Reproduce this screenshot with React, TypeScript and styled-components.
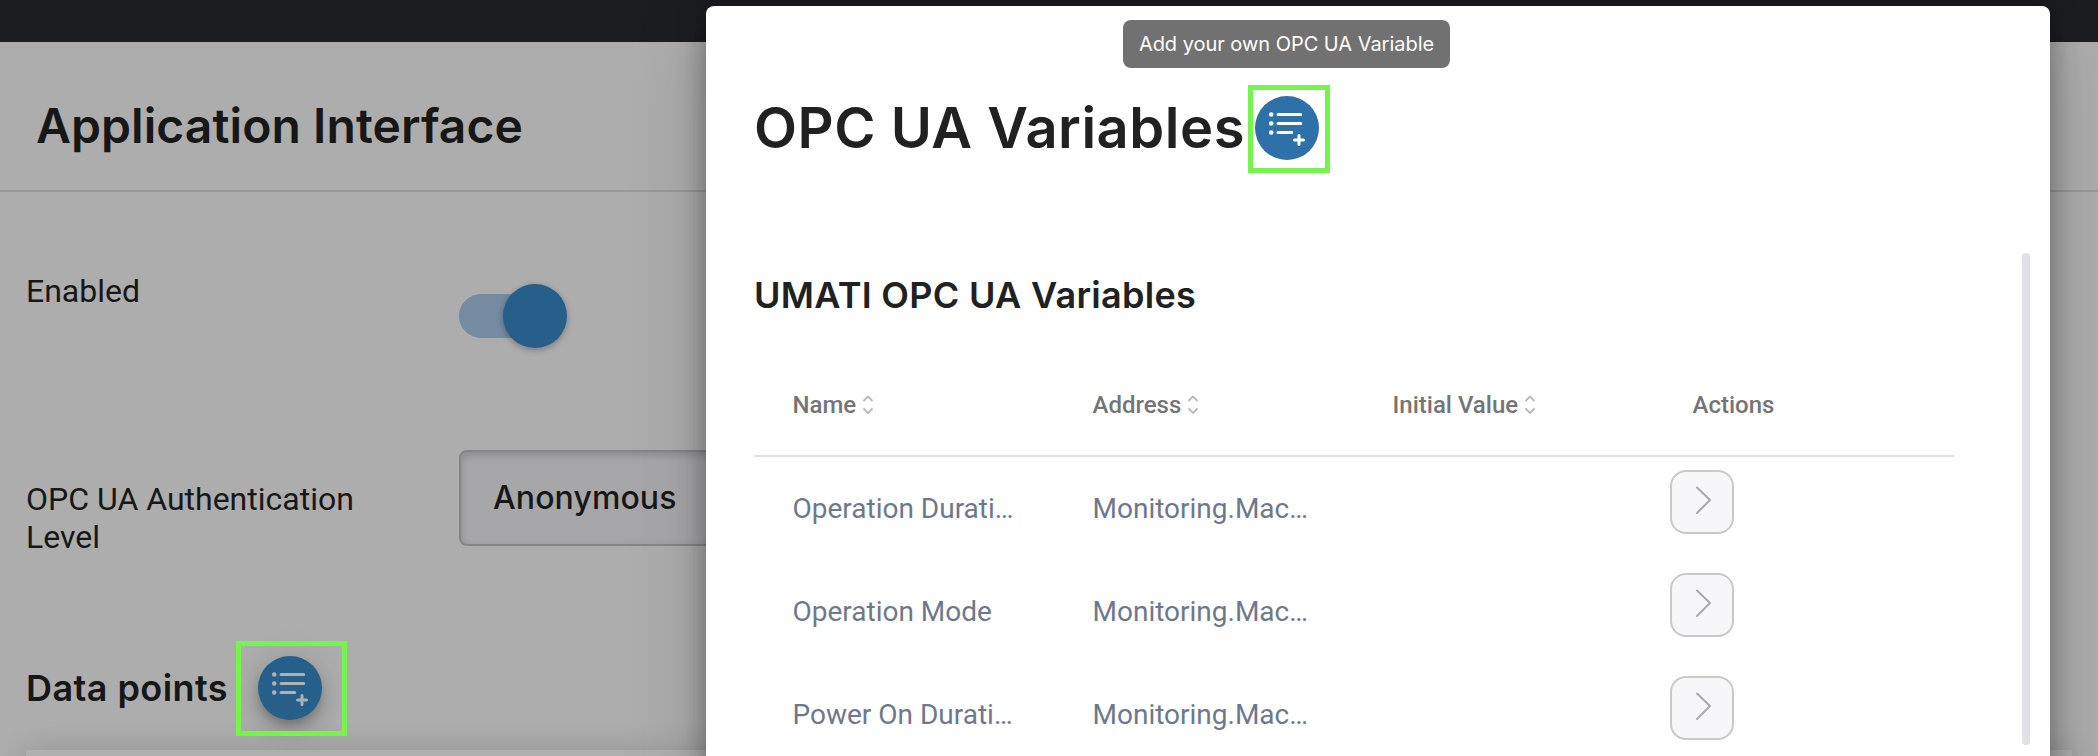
import React from "react";
import styled, { createGlobalStyle } from "styled-components";

const GlobalStyle = createGlobalStyle`
  * { box-sizing: border-box; }
  html, body { margin: 0; padding: 0; overflow: hidden; }
  body { font-family: Roboto, "Liberation Sans", sans-serif; }
  h1, h2, h3, p { margin: 0; }
`;

const inter = `Inter, "Liberation Sans", sans-serif`;

const Screen = styled.div`
  position: relative;
  width: 2098px;
  height: 756px;
  overflow: hidden;
  background: #adadad;
  color: #171717;
`;

const TopBar = styled.div`
  height: 42px;
  background: #1c1d21;
`;

const PageHeader = styled.header`
  height: 150px;
  padding: 54px 36px 0;
  border-bottom: 2px solid #989898;
`;

const PageTitle = styled.h1`
  font: 600 48px/60px ${inter};
  letter-spacing: 0.08px;
`;

const Form = styled.main`
  padding: 80px 26px 0;
`;

const FormRow = styled.div<{ $height: number }>`
  display: grid;
  grid-template-columns: 433px 700px;
  height: ${(p) => p.$height}px;
`;

const Label = styled.p<{ $top?: number }>`
  width: 360px;
  padding-top: ${(p) => p.$top ?? 0}px;
  font-size: 32px;
  line-height: 38px;
`;

const Track = styled.div`
  display: flex;
  align-items: center;
  justify-content: flex-end;
  width: 102px;
  height: 44px;
  margin-top: 22px;
  border-radius: 22px;
  background: #748ba1;
`;

const Thumb = styled.span`
  width: 64px;
  height: 64px;
  margin-right: -6px;
  flex: none;
  border-radius: 50%;
  background: #275f8b;
  box-shadow: 0 2px 6px rgba(0, 0, 0, 0.3);
`;

const Select = styled.div`
  display: flex;
  align-items: center;
  height: 96px;
  padding: 0 32px;
  border: 2px solid #858588;
  border-radius: 8px;
  background: #a7a7a9;
  box-shadow: inset 0 3px 8px rgba(0, 0, 0, 0.18);
  font: 500 32px/40px ${inter};
  letter-spacing: 0.1px;
`;

const SectionHeading = styled.div`
  display: flex;
  align-items: center;
  gap: 31px;
  height: 64px;
`;

const SectionTitle = styled.h2`
  width: 201px;
  white-space: nowrap;
  font: 600 36px/44px ${inter};
  letter-spacing: 0.43px;
`;

const Card = styled.section`
  height: 80px;
  margin: 30px 0 0;
  background: #afafaf;
  box-shadow: 0 0 30px rgba(0, 0, 0, 0.15);
`;

const RoundButton = styled.button<{ $dimmed?: boolean }>`
  position: relative;
  flex: none;
  width: 64px;
  height: 64px;
  padding: 0;
  border: 0;
  border-radius: 50%;
  color: ${(p) => (p.$dimmed ? "#b0b0b0" : "#ffffff")};
  background: ${(p) => (p.$dimmed ? "#275f8b" : "#2d71a8")};
  box-shadow: ${(p) =>
    p.$dimmed
      ? "0 6px 10px -2px rgba(0,0,0,.2), 0 12px 20px rgba(0,0,0,.14), 0 2px 36px rgba(0,0,0,.12)"
      : "none"};
  svg { display: block; }
`;

const Highlight = styled.span<{ $inset: string }>`
  position: absolute;
  inset: ${(p) => p.$inset};
  border: 5px solid #73f54b;
`;

const Dialog = styled.div`
  position: absolute;
  left: 706px;
  top: 6px;
  width: 1344px;
  height: 800px;
  padding: 0 48px;
  border-radius: 8px;
  background: #fff;
  color: #212121;
  box-shadow: 0 22px 30px -14px rgba(0, 0, 0, 0.2),
    0 28px 76px 6px rgba(0, 0, 0, 0.14), 0 0 30px rgba(0, 0, 0, 0.3);
`;

const DialogHeader = styled.div`
  display: flex;
  align-items: center;
  height: 247px;
  padding-bottom: 3px;
`;

const DialogTitle = styled.h2`
  width: 501px;
  white-space: nowrap;
  font: 600 56px/68px ${inter};
  letter-spacing: 0.54px;
`;

const Tooltip = styled.div`
  position: absolute;
  left: 417px;
  top: 14px;
  display: flex;
  align-items: center;
  justify-content: center;
  width: 327px;
  height: 48px;
  border-radius: 8px;
  background: #717171;
  color: #fff;
  white-space: nowrap;
  font: 400 20px/24px ${inter};
  letter-spacing: -0.03px;
`;

const ScrollArea = styled.div`
  display: flex;
  justify-content: space-between;
  margin-right: -28px;
`;

const ScrollThumb = styled.span`
  width: 8px;
  height: 492px;
  border-radius: 4px;
  background: #e0e1e6;
`;

const TableTitle = styled.h3`
  height: 102px;
  padding-top: 20px;
  white-space: nowrap;
  font: 600 36px/44px ${inter};
  letter-spacing: 0.3px;
`;

const TableRow = styled.div`
  display: grid;
  grid-template-columns: repeat(4, 300px);
  align-items: start;
  width: 1200px;
  height: 103px;
  color: #6f788b;
`;

const TableHead = styled(TableRow)`
  height: 102px;
  align-items: center;
  border-bottom: 2px solid #e0e0e0;
  color: #757575;
`;

const HeadCell = styled.div`
  display: flex;
  align-items: center;
  gap: 6px;
  padding-left: 38.5px;
  font-weight: 500;
  font-size: 24px;
  line-height: 28px;
`;

const Cell = styled.div`
  padding: 34px 38px 0 38.5px;
  white-space: nowrap;
  font-size: 28px;
  line-height: 36px;
`;

const RowButton = styled.button`
  width: 64px;
  height: 64px;
  margin: 13px 0 0 16px;
  padding: 0;
  border: 2px solid #c9c9ca;
  border-radius: 16px;
  background: #f7f7fa;
  svg { display: block; }
`;

const ListAddIcon = () => (
  <svg width="64" height="64" viewBox="0 0 64 64" fill="none" stroke="currentColor" strokeWidth="3" strokeLinecap="round">
    <g fill="currentColor" stroke="none">
      <circle cx="16.2" cy="18.5" r="2.3" />
      <circle cx="16.2" cy="27.5" r="2.3" />
      <circle cx="16.2" cy="36.5" r="2.3" />
    </g>
    <path d="M23 18.5H45.7M23 27.5H45.7M23 36.5H36.8M39.5 44H48.5M44 39.5V48.5" />
  </svg>
);

const SortIcon = () => (
  <svg width="12" height="20" viewBox="0 0 12 20" fill="none" stroke="#b9b9b9" strokeWidth="1.8">
    <path d="M1.5 6L6 1.5L10.5 6M1.5 13.5L6 18L10.5 13.5" />
  </svg>
);

const ChevronIcon = () => (
  <svg width="60" height="60" viewBox="0 0 60 60" fill="none" stroke="#a9a9ae" strokeWidth="2" strokeLinecap="round" strokeLinejoin="round">
    <path d="M25 15.5L38 28L25 41" />
  </svg>
);

const columns = ["Name", "Address", "Initial Value"];
const variables = [
  { name: "Operation Durati…", address: "Monitoring.Mac…" },
  { name: "Operation Mode", address: "Monitoring.Mac…" },
  { name: "Power On Durati…", address: "Monitoring.Mac…" },
];

export default function App() {
  return (
    <Screen>
      <GlobalStyle />
      <TopBar />
      <PageHeader>
        <PageTitle>Application Interface</PageTitle>
      </PageHeader>
      <Form>
        <FormRow $height={178}>
          <Label>Enabled</Label>
          <Track>
            <Thumb />
          </Track>
        </FormRow>
        <FormRow $height={206}>
          <Label $top={30}>OPC UA Authentication Level</Label>
          <Select>Anonymous</Select>
        </FormRow>
        <SectionHeading>
          <SectionTitle>Data points</SectionTitle>
          <RoundButton $dimmed>
            <ListAddIcon />
            <Highlight $inset="-15px -25px -16px -22px" />
          </RoundButton>
        </SectionHeading>
        <Card />
      </Form>
      <Dialog>
        <Tooltip>Add your own OPC UA Variable</Tooltip>
        <DialogHeader>
          <DialogTitle>OPC UA Variables</DialogTitle>
          <RoundButton>
            <ListAddIcon />
            <Highlight $inset="-11px -11px -13px -7px" />
          </RoundButton>
        </DialogHeader>
        <ScrollArea>
          <div>
            <TableTitle>UMATI OPC UA Variables</TableTitle>
            <TableHead>
              {columns.map((c) => (
                <HeadCell key={c}>
                  {c}
                  <SortIcon />
                </HeadCell>
              ))}
              <HeadCell>Actions</HeadCell>
            </TableHead>
            {variables.map((v) => (
              <TableRow key={v.name}>
                <Cell>{v.name}</Cell>
                <Cell>{v.address}</Cell>
                <Cell />
                <RowButton>
                  <ChevronIcon />
                </RowButton>
              </TableRow>
            ))}
          </div>
          <ScrollThumb />
        </ScrollArea>
      </Dialog>
    </Screen>
  );
}
